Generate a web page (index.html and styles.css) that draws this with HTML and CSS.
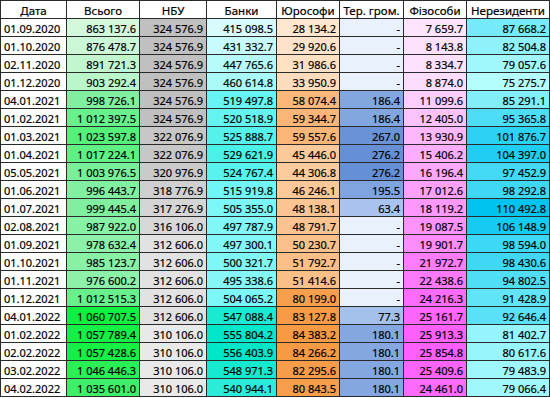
FILE: index.html
```html
<!DOCTYPE html>
<html lang="uk">
<head>
<meta charset="utf-8">
<title>Таблиця</title>
<link rel="stylesheet" href="styles.css">
</head>
<body>
<div class="sheet" id="sheet">
  <div class="row head"><div class="c">Дата</div><div class="c">Всього</div><div class="c">НБУ</div><div class="c">Банки</div><div class="c">Юрософи</div><div class="c">Тер. гром.</div><div class="c">Фізособи</div><div class="c">Нерезиденти</div></div>
  <div class="row"><div class="c">01.09.2020</div><div class="c">863 137.6</div><div class="c">324 576.9</div><div class="c">415 098.5</div><div class="c">28 134.2</div><div class="c">-</div><div class="c">7 659.7</div><div class="c">87 668.2</div></div>
  <div class="row"><div class="c">01.10.2020</div><div class="c">876 478.7</div><div class="c">324 576.9</div><div class="c">431 332.7</div><div class="c">29 920.6</div><div class="c">-</div><div class="c">8 143.8</div><div class="c">82 504.8</div></div>
  <div class="row"><div class="c">02.11.2020</div><div class="c">891 721.3</div><div class="c">324 576.9</div><div class="c">447 765.6</div><div class="c">31 986.6</div><div class="c">-</div><div class="c">8 334.7</div><div class="c">79 057.6</div></div>
  <div class="row"><div class="c">01.12.2020</div><div class="c">903 292.4</div><div class="c">324 576.9</div><div class="c">460 614.8</div><div class="c">33 950.9</div><div class="c">-</div><div class="c">8 874.0</div><div class="c">75 275.7</div></div>
  <div class="row"><div class="c">04.01.2021</div><div class="c">998 726.1</div><div class="c">324 576.9</div><div class="c">519 497.8</div><div class="c">58 074.4</div><div class="c">186.4</div><div class="c">11 099.6</div><div class="c">85 291.1</div></div>
  <div class="row"><div class="c">01.02.2021</div><div class="c">1 012 397.5</div><div class="c">324 576.9</div><div class="c">520 518.9</div><div class="c">59 344.7</div><div class="c">186.4</div><div class="c">12 405.0</div><div class="c">95 365.8</div></div>
  <div class="row"><div class="c">01.03.2021</div><div class="c">1 023 597.8</div><div class="c">322 076.9</div><div class="c">525 888.7</div><div class="c">59 557.6</div><div class="c">267.0</div><div class="c">13 930.9</div><div class="c">101 876.7</div></div>
  <div class="row"><div class="c">01.04.2021</div><div class="c">1 017 224.1</div><div class="c">322 076.9</div><div class="c">529 621.9</div><div class="c">45 446.0</div><div class="c">276.2</div><div class="c">15 406.2</div><div class="c">104 397.0</div></div>
  <div class="row"><div class="c">05.05.2021</div><div class="c">1 003 976.5</div><div class="c">320 976.9</div><div class="c">524 767.4</div><div class="c">44 306.8</div><div class="c">276.2</div><div class="c">16 196.4</div><div class="c">97 452.9</div></div>
  <div class="row"><div class="c">01.06.2021</div><div class="c">996 443.7</div><div class="c">318 776.9</div><div class="c">515 919.8</div><div class="c">46 246.1</div><div class="c">195.5</div><div class="c">17 012.6</div><div class="c">98 292.8</div></div>
  <div class="row"><div class="c">01.07.2021</div><div class="c">999 445.4</div><div class="c">317 276.9</div><div class="c">505 355.0</div><div class="c">48 138.1</div><div class="c">63.4</div><div class="c">18 119.2</div><div class="c">110 492.8</div></div>
  <div class="row"><div class="c">02.08.2021</div><div class="c">987 922.0</div><div class="c">316 106.0</div><div class="c">497 787.9</div><div class="c">48 791.7</div><div class="c">-</div><div class="c">19 087.5</div><div class="c">106 148.9</div></div>
  <div class="row"><div class="c">01.09.2021</div><div class="c">978 632.4</div><div class="c">312 606.0</div><div class="c">497 300.1</div><div class="c">50 230.7</div><div class="c">-</div><div class="c">19 901.7</div><div class="c">98 594.0</div></div>
  <div class="row"><div class="c">01.10.2021</div><div class="c">985 123.7</div><div class="c">312 606.0</div><div class="c">500 321.7</div><div class="c">51 792.7</div><div class="c">-</div><div class="c">21 972.7</div><div class="c">98 430.6</div></div>
  <div class="row"><div class="c">01.11.2021</div><div class="c">976 600.2</div><div class="c">312 606.0</div><div class="c">495 338.6</div><div class="c">51 414.6</div><div class="c">-</div><div class="c">22 438.6</div><div class="c">94 802.5</div></div>
  <div class="row"><div class="c">01.12.2021</div><div class="c">1 012 515.3</div><div class="c">312 606.0</div><div class="c">504 065.2</div><div class="c">80 199.0</div><div class="c">-</div><div class="c">24 216.3</div><div class="c">91 428.9</div></div>
  <div class="row"><div class="c">04.01.2022</div><div class="c">1 060 707.5</div><div class="c">312 606.0</div><div class="c">547 088.4</div><div class="c">83 127.8</div><div class="c">77.3</div><div class="c">25 161.7</div><div class="c">92 646.4</div></div>
  <div class="row"><div class="c">01.02.2022</div><div class="c">1 057 789.4</div><div class="c">310 106.0</div><div class="c">555 804.2</div><div class="c">84 383.2</div><div class="c">180.1</div><div class="c">25 913.3</div><div class="c">81 402.7</div></div>
  <div class="row"><div class="c">02.02.2022</div><div class="c">1 057 428.6</div><div class="c">310 106.0</div><div class="c">556 403.9</div><div class="c">84 266.2</div><div class="c">180.1</div><div class="c">25 854.8</div><div class="c">80 617.6</div></div>
  <div class="row"><div class="c">03.02.2022</div><div class="c">1 046 446.3</div><div class="c">310 106.0</div><div class="c">548 971.3</div><div class="c">82 295.6</div><div class="c">180.1</div><div class="c">25 409.6</div><div class="c">79 483.9</div></div>
  <div class="row"><div class="c">04.02.2022</div><div class="c">1 035 601.0</div><div class="c">310 106.0</div><div class="c">540 944.1</div><div class="c">80 843.5</div><div class="c">180.1</div><div class="c">24 461.0</div><div class="c">79 066.4</div></div>
</div>
<script src="script.js"></script>
</body>
</html>
```

FILE: styles.css
```css
html, body {
  margin: 0;
  padding: 0;
  background: #ffffff;
}

.sheet {
  display: grid;
  grid-template-columns: 65px 72px 66px 69px 62px 63px 62px 82px;
  grid-auto-rows: 17px;
  gap: 1px;
  padding: 1px;
  width: max-content;
  background: #2a2a2a;
  font-family: "Noto Sans", "Liberation Sans", sans-serif;
  font-size: 11px;
  color: #000000;
  -webkit-text-stroke: 0.2px #000000;
}

.row {
  display: contents;
}

.c {
  background: #ffffff;
  padding: 2px 3px 0 3px;
  line-height: 15px;
  white-space: nowrap;
  overflow: hidden;
  text-align: right;
}

.row .c:first-child {
  text-align: left;
}

.head .c,
.head .c:first-child {
  text-align: center;
  padding-left: 0;
  padding-right: 0;
  font-size: 11.5px;
}

.dash {
  background: #e8f1fc;
}
```

FILE: script.js
```js
(function () {
  var scales = {
    1: { type: 'median', stops: ['#d4f8dc', '#80f0a0', '#10f040'] },
    2: { type: 'linear', stops: ['#e9e9e9', '#c0c0c0'] },
    3: { type: 'median', stops: ['#d8fcfc', '#70f6f6', '#00e6c8'] },
    4: { type: 'median', stops: ['#fee6cf', '#fbbf88', '#f79a44'] },
    5: { type: 'linear', stops: ['#a8c4ee', '#6690d6'] },
    6: { type: 'linear', stops: ['#fde6fd', '#fd60fd'] },
    7: { type: 'linear', stops: ['#b4fefe', '#00c4f0'] }
  };
  function rgb(h) {
    return [parseInt(h.slice(1, 3), 16), parseInt(h.slice(3, 5), 16), parseInt(h.slice(5, 7), 16)];
  }
  function mix(a, b, t) {
    var x = rgb(a), y = rgb(b);
    return 'rgb(' + [0, 1, 2].map(function (i) { return Math.round(x[i] + (y[i] - x[i]) * t); }).join(',') + ')';
  }
  var rows = Array.prototype.slice.call(document.querySelectorAll('.sheet .row:not(.head)'));
  Object.keys(scales).forEach(function (k) {
    var col = +k, s = scales[k];
    var cells = rows.map(function (r) { return r.children[col]; });
    var vals = [];
    cells.forEach(function (c) {
      var t = c.textContent.replace(/\s/g, '');
      if (t !== '-') vals.push(parseFloat(t));
    });
    var sorted = vals.slice().sort(function (a, b) { return a - b; });
    var min = sorted[0], max = sorted[sorted.length - 1];
    var med = sorted[Math.floor(sorted.length / 2)];
    cells.forEach(function (c) {
      var t = c.textContent.replace(/\s/g, '');
      if (t === '-') { c.classList.add('dash'); return; }
      var v = parseFloat(t), color;
      if (s.type === 'linear') {
        color = mix(s.stops[0], s.stops[1], max === min ? 0 : (v - min) / (max - min));
      } else if (v <= med) {
        color = mix(s.stops[0], s.stops[1], med === min ? 1 : (v - min) / (med - min));
      } else {
        color = mix(s.stops[1], s.stops[2], (v - med) / (max - med));
      }
      c.style.backgroundColor = color;
    });
  });
})();
```
